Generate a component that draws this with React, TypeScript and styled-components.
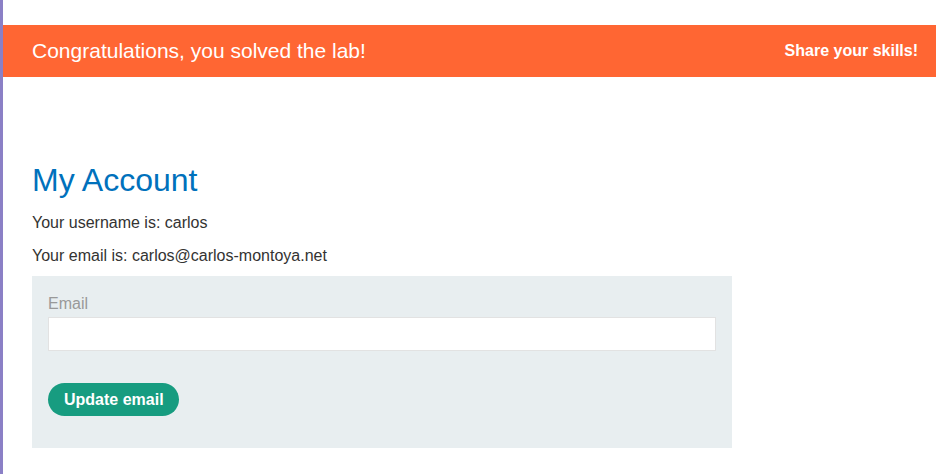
import React from 'react';
import styled, { createGlobalStyle } from 'styled-components';

const GlobalStyle = createGlobalStyle`
  html, body {
    margin: 0;
    padding: 0;
    background: #fff;
  }
  body {
    font-family: "Liberation Sans", Arial, sans-serif;
    color: #333332;
  }
`;

const Page = styled.div`
  min-height: 100vh;
  border-left: 3px solid #8b80c6;
  box-sizing: border-box;
  padding-top: 25px;
`;

const Banner = styled.header`
  display: flex;
  align-items: center;
  justify-content: space-between;
  height: 52px;
  padding: 0 18px 0 29px;
  background: #ff6633;
  color: #fff;
`;

const BannerTitle = styled.h4`
  margin: 0;
  font-size: 21px;
  font-weight: normal;
`;

const ShareLink = styled.a`
  font-size: 16px;
  font-weight: bold;
  color: #fff;
  text-decoration: none;
`;

const Container = styled.main`
  padding: 85px 29px 0;
`;

const Title = styled.h1`
  margin: 0 0 15px;
  font-size: 32px;
  font-weight: normal;
  color: #0071bc;
`;

const Info = styled.p`
  margin: 0 0 15px;
  font-size: 16px;
  line-height: 18px;
`;

const Form = styled.form`
  width: 700px;
  box-sizing: border-box;
  margin-top: -4px;
  padding: 19px 16px 32px;
  background: #e8eef0;
`;

const Label = styled.label`
  display: block;
  margin-bottom: 4px;
  font-size: 16px;
  line-height: 18px;
  color: #999;
`;

const Input = styled.input`
  display: block;
  width: 100%;
  height: 34px;
  box-sizing: border-box;
  margin: 0 0 32px;
  border: 1px solid #e2e2e2;
  background: #fff;
  font: inherit;
`;

const Button = styled.button`
  height: 33px;
  padding: 0 15px 0 16px;
  border: none;
  border-radius: 20px;
  background: #179c80;
  color: #fff;
  font-family: inherit;
  font-size: 16px;
  font-weight: bold;
`;

export default function App() {
  return (
    <>
      <GlobalStyle />
      <Page>
        <Banner>
          <BannerTitle>Congratulations, you solved the lab!</BannerTitle>
          <ShareLink href="#">Share your skills!</ShareLink>
        </Banner>
        <Container>
          <Title>My Account</Title>
          <Info>Your username is: carlos</Info>
          <Info>Your email is: carlos@carlos-montoya.net</Info>
          <Form onSubmit={(e) => e.preventDefault()}>
            <Label htmlFor="email">Email</Label>
            <Input id="email" name="email" type="email" />
            <Button type="submit">Update email</Button>
          </Form>
        </Container>
      </Page>
    </>
  );
}
